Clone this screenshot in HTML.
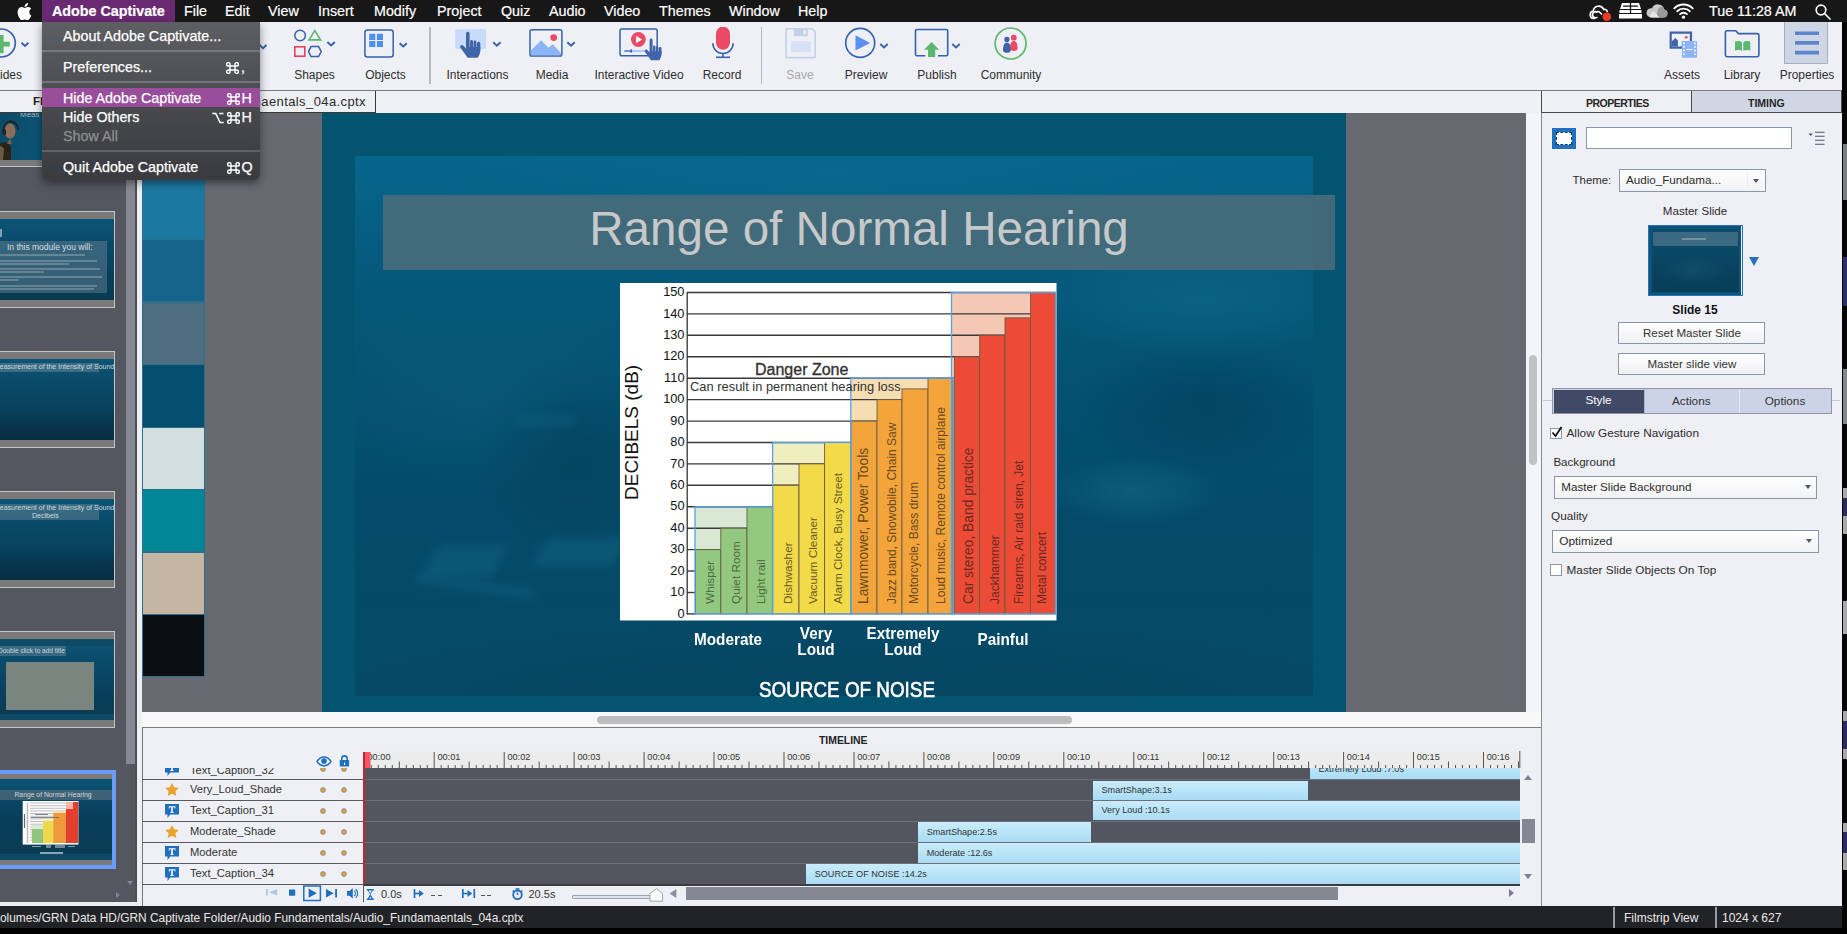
<!DOCTYPE html>
<html><head><meta charset="utf-8">
<style>
*{margin:0;padding:0;box-sizing:border-box}
html,body{width:1847px;height:934px;overflow:hidden;background:#000;font-family:"Liberation Sans",sans-serif}
.a{position:absolute}
#menubar{left:0;top:0;width:1847px;height:22px;background:#171717;color:#fff;font-size:14.5px}
#menubar span{position:absolute;top:3px;white-space:nowrap;font-size:14.3px;line-height:16px;-webkit-text-stroke:.2px #fff}
#toolbar{left:0;top:22px;width:1842px;height:69px;background:#eff0f5;border-bottom:1px solid #7d7d80}
.tl{position:absolute;top:46px;font-size:12px;color:#2e2e30;white-space:nowrap;transform:translateX(-50%)}
#tabrow{left:0;top:91px;width:1842px;height:22px;background:#eef0f5;z-index:5}
#film{left:0;top:112px;width:137px;height:794px;background:#54575f}
#swcol{left:137px;top:112px;width:5px;height:794px;background:#eeeff3}
#canvas{left:142px;top:112px;width:1384px;height:600px;background:#686a72}
#slide{left:322px;top:112px;width:1024px;height:600px;background:#02546f;overflow:hidden}
#vscroll{left:1526px;top:112px;width:15px;height:600px;background:#f8f8f8}
#hscroll{left:142px;top:712px;width:1399px;height:16px;background:#f8f8f8;border-bottom:1px solid #7d7d80}
#tlhead{left:142px;top:728px;width:1399px;height:23px;background:#eef0f5;border-bottom:1px solid #54555a;border-left:1px solid #77787e}
#timeline{left:142px;top:750px;width:1399px;height:156px;background:#eef0f5;border-left:1px solid #77787e}
#props{left:1541px;top:112px;width:301px;height:794px;background:#eff0f5;border-left:1px solid #8a8a90}
#status{left:0;top:906px;width:1842px;height:22px;background:#222327;color:#f0f0f0;font-size:12.5px}
#botblack{left:0;top:928px;width:1847px;height:6px;background:#000}
#rightedge{left:1842px;top:22px;width:5px;height:906px;background:#050505}
</style></head><body>
<div id="menubar" class="a">
<svg class="a" style="left:17px;top:3px" width="15" height="17" viewBox="0 0 15 17"><path fill="#fff" d="M12.3 9.1c0-2.2 1.8-3.2 1.9-3.3-1-1.5-2.6-1.7-3.2-1.7-1.3-.1-2.6.8-3.3.8-.7 0-1.7-.8-2.8-.8C3.4 4.1 2 5 1.3 6.3-.2 8.9.9 12.8 2.4 15c.7 1 1.5 2.2 2.6 2.1 1.1 0 1.5-.7 2.7-.7 1.3 0 1.6.7 2.8.7 1.2 0 1.9-1.1 2.6-2.1.8-1.2 1.2-2.3 1.2-2.4-.1 0-2-.8-2-3.5zM10.2 2.7C10.8 2 11.2 1 11.1 0c-.9 0-1.9.6-2.6 1.3-.6.6-1.1 1.6-.9 2.6 1 .1 2-.5 2.6-1.2z"/></svg>
<div class="a" style="left:42px;top:0;width:133px;height:22px;background:#6a2a72"></div>
<span style="left:52px;font-weight:bold;font-size:14.3px">Adobe Captivate</span>
<span style="left:184px">File</span>
<span style="left:225px">Edit</span>
<span style="left:268px">View</span>
<span style="left:318px">Insert</span>
<span style="left:374px">Modify</span>
<span style="left:437px">Project</span>
<span style="left:501px">Quiz</span>
<span style="left:549px">Audio</span>
<span style="left:604px">Video</span>
<span style="left:659px">Themes</span>
<span style="left:729px">Window</span>
<span style="left:798px">Help</span>
<span style="left:1709px">Tue 11:28 AM</span>
<svg class="a" style="left:1589px;top:3px" width="24" height="18" viewBox="0 0 24 18"><g fill="none" stroke="#fff" stroke-width="1.6"><path d="M6 15.5H4.5a3.8 3.8 0 0 1-.3-7.5 5.5 5.5 0 0 1 10.5-1.5 3 3 0 0 1 3.8 2.6"/><path d="M8.5 9.5a3 3 0 1 0 0 4.5"/><path d="M6.5 9.5a3 3 0 0 1 4.5 0l2 2"/></g><circle cx="17.8" cy="13.8" r="4.3" fill="#f03a24"/></svg>
<svg class="a" style="left:1619px;top:3px" width="23" height="16" viewBox="0 0 23 16"><path fill="#fff" d="M3 0h17l2 6H1zM0.5 7h22v3h-22zM0 11h23v4.5H0z"/><path stroke="#171717" stroke-width="1.3" d="M11.5 0v10M4 3.2h15"/></svg>
<svg class="a" style="left:1646px;top:3px" width="22" height="15" viewBox="0 0 22 15"><path fill="#c9c9c9" d="M4.5 14.5h13a4 4 0 0 0 .8-7.9A6.5 6.5 0 0 0 6 5.2a4.7 4.7 0 0 0-1.5 9.3z"/><path fill="#9a9a9a" d="M10 14.5h7.5a4 4 0 0 0 .8-7.9 6 6 0 0 0-2-2.8 5 5 0 0 0-4.8 4.5z"/><path fill="#e8e8e8" d="M4.5 14.5h9l-5.5-6a4.7 4.7 0 0 0-3.5 6z"/></svg>
<svg class="a" style="left:1673px;top:3px" width="21" height="16" viewBox="0 0 21 16"><g fill="none" stroke="#fff" stroke-width="1.9" stroke-linecap="round"><path d="M1.3 5.3a13 13 0 0 1 18.4 0"/><path d="M4.2 8.2a9 9 0 0 1 12.6 0"/><path d="M7.1 11.1a4.8 4.8 0 0 1 6.8 0"/></g><circle cx="10.5" cy="14.2" r="1.6" fill="#fff"/></svg>
<svg class="a" style="left:1815px;top:4px" width="16" height="16" viewBox="0 0 16 16"><g fill="none" stroke="#fff" stroke-width="1.7"><circle cx="6" cy="6" r="4.8"/><path d="M9.5 9.5l5.5 5.5" stroke-linecap="round"/></g></svg>
</div>
<div id="toolbar" class="a">
<!-- slides -->
<svg class="a" style="left:0;top:5px" width="30" height="32" viewBox="0 5 30 32"><circle cx="1.3" cy="21" r="14" fill="none" stroke="#3561ae" stroke-width="1.7"/><path fill="#5cb86f" d="M-1 13h4.6v6.8h6.2v4.6H3.6v6.8H-1z"/><path d="M21.5 20.8l3.5 3.2 3.5-3.2" fill="none" stroke="#3561ae" stroke-width="1.9"/></svg>
<div class="tl" style="left:11px">ides</div>
<svg class="a" style="left:255px;top:21px" width="15" height="10"><path d="M4.5 2l3.5 3.2 3.5-3.2" fill="none" stroke="#3561ae" stroke-width="1.9"/></svg>
<!-- shapes -->
<svg class="a" style="left:290px;top:5px" width="50" height="38" viewBox="290 27 50 38"><circle cx="300.1" cy="35.5" r="5.3" fill="none" stroke="#3561ae" stroke-width="1.5"/><path d="M314.8 30.6l5.8 9.3h-11.6z" fill="none" stroke="#5cb86f" stroke-width="1.6" stroke-linejoin="miter"/><rect x="294.8" y="46.8" width="10" height="9.4" fill="none" stroke="#e8405e" stroke-width="1.6"/><path d="M311 46.6h7.6l2.6 5-2.6 4.9H311l-2.5-4.9z" fill="none" stroke="#3561ae" stroke-width="1.5"/><path d="M327.4 42l3.7 3.4 3.7-3.4" fill="none" stroke="#3561ae" stroke-width="1.9"/></svg>
<div class="tl" style="left:314.5px">Shapes</div>
<!-- objects -->
<svg class="a" style="left:360px;top:5px" width="50" height="38" viewBox="360 27 50 38"><rect x="364.9" y="29.9" width="28.3" height="27" rx="2.5" fill="none" stroke="#3561ae" stroke-width="1.5"/><path fill="#4f8ef2" d="M369.2 33.8h6.1v6.1h-6.1zM376.9 33.8h6.1v6.1h-6.1zM369.2 41h6.1v6.1h-6.1zM376.9 41h6.1v6.1h-6.1z"/><path d="M399.6 43.2l3.6 3.3 3.6-3.3" fill="none" stroke="#3561ae" stroke-width="1.9"/></svg>
<div class="tl" style="left:385.5px">Objects</div>
<div class="a" style="left:429px;top:5px;width:1.5px;height:57px;background:#b7bac4"></div>
<!-- interactions -->
<svg class="a" style="left:450px;top:5px" width="60" height="38" viewBox="450 27 60 38"><rect x="455.2" y="29.1" width="30.9" height="19.9" rx="1.5" fill="#c7dcfb"/><g fill="#3f64a8"><rect x="466" y="31.8" width="3.6" height="18" rx="1.8"/><rect x="470.1" y="40.1" width="2.9" height="10" rx="1.45"/><rect x="473.5" y="40.6" width="2.9" height="10" rx="1.45"/><rect x="476.9" y="41.8" width="3.4" height="10" rx="1.7"/><path d="M466 47h14.3v4c0 3-1.6 5-2.6 6.8h-10.2c-1.5-2.8-4.4-6.3-7-9.8-.7-1-.3-2.2.5-2.7.8-.5 1.8-.3 2.4.5l2.6 2.7z"/></g><path d="M493.2 42.3l3.7 3.4 3.7-3.4" fill="none" stroke="#3561ae" stroke-width="1.9"/></svg>
<div class="tl" style="left:477.5px">Interactions</div>
<!-- media -->
<svg class="a" style="left:525px;top:5px" width="55" height="38" viewBox="525 27 55 38"><rect x="530" y="29.8" width="31.9" height="26.3" rx="1.8" fill="none" stroke="#3561ae" stroke-width="1.5"/><path fill="#8db4f7" d="M530.8 55.3V50.6l10.3-10.4 7.4 7.6 4.2-3.6 8.4 9v2.1z"/><circle cx="553.7" cy="37.6" r="3.4" fill="#ea4a63"/><path d="M567.3 42.3l3.7 3.4 3.7-3.4" fill="none" stroke="#3561ae" stroke-width="1.9"/></svg>
<div class="tl" style="left:552px">Media</div>
<!-- interactive video -->
<svg class="a" style="left:615px;top:5px" width="50" height="38" viewBox="615 27 50 38"><rect x="620" y="29.1" width="37.2" height="26.7" rx="1.8" fill="none" stroke="#3561ae" stroke-width="1.5"/><circle cx="638.4" cy="39.5" r="7.4" fill="#ea4a63"/><path fill="#fff" d="M636 35.7l6 3.8-6 3.8z"/><path d="M624.3 51h7" stroke="#3561ae" stroke-width="1.3"/><rect x="630.4" y="49.4" width="1.7" height="3.2" fill="#3561ae"/><path d="M632 51h16" stroke="#8db4f7" stroke-width="1.3"/><g fill="#3f64a8" transform="translate(649.6 38.6) scale(0.83) translate(-466 -31.8)"><rect x="466" y="31.8" width="3.6" height="18" rx="1.8"/><rect x="470.1" y="40.1" width="2.9" height="10" rx="1.45"/><rect x="473.5" y="40.6" width="2.9" height="10" rx="1.45"/><rect x="476.9" y="41.8" width="3.4" height="10" rx="1.7"/><path d="M466 47h14.3v4c0 3-1.6 5-2.6 6.8h-10.2c-1.5-2.8-4.4-6.3-7-9.8-.7-1-.3-2.2.5-2.7.8-.5 1.8-.3 2.4.5l2.6 2.7z"/></g></svg>
<div class="tl" style="left:639px">Interactive Video</div>
<!-- record -->
<svg class="a" style="left:705px;top:5px" width="35" height="38" viewBox="705 27 35 38"><rect x="716" y="26.6" width="14" height="23.2" rx="7" fill="#ea4a63"/><path d="M712.8 43.3a10.2 10.2 0 0 0 20.4 0" fill="none" stroke="#3561ae" stroke-width="1.6"/><path d="M723 53.5v4" stroke="#3561ae" stroke-width="1.6"/><path d="M716 57.3h14" stroke="#3561ae" stroke-width="1.6"/></svg>
<div class="tl" style="left:722px">Record</div>
<div class="a" style="left:760.5px;top:5px;width:1.5px;height:57px;background:#b7bac4"></div>
<!-- save -->
<svg class="a" style="left:780px;top:5px" width="40" height="38" viewBox="780 27 40 38"><path d="M787 28.8h25l3.2 3.2v24.8c0 .4-.3.8-.8.8h-27.6c-.4 0-.8-.4-.8-.8V29.6c0-.5.4-.8.8-.8z" fill="none" stroke="#c3d0ea" stroke-width="1.6"/><path fill="#c3d0ea" d="M793.8 29h14v7.2h-14z"/><path fill="#eff0f5" d="M803.5 30h2.3v4.4h-2.3z"/><rect x="791.2" y="41.3" width="19.6" height="11" rx="1" fill="#d6e1f5"/></svg>
<div class="tl" style="left:800px;color:#a9aaae">Save</div>
<!-- preview -->
<svg class="a" style="left:840px;top:5px" width="55" height="38" viewBox="840 27 55 38"><circle cx="860.2" cy="42.9" r="14.5" fill="none" stroke="#3561ae" stroke-width="1.6"/><path fill="#5b8ff2" d="M855.5 35.2l14.6 7.7-14.6 7.7z"/><path d="M880.3 44l3.7 3.4 3.7-3.4" fill="none" stroke="#3561ae" stroke-width="1.9"/></svg>
<div class="tl" style="left:866px">Preview</div>
<!-- publish -->
<svg class="a" style="left:910px;top:5px" width="55" height="38" viewBox="910 27 55 38"><path d="M925.3 55.8h-8.5a1.3 1.3 0 0 1-1.3-1.3V30.8c0-.7.6-1.3 1.3-1.3h29.6c.7 0 1.3.6 1.3 1.3v23.7c0 .7-.6 1.3-1.3 1.3h-8.4" fill="none" stroke="#3561ae" stroke-width="1.6"/><path fill="#5cb86f" d="M931.6 42l7.6 7.8h-4v7.3h-7.2v-7.3h-4z"/><path d="M952.3 44l3.7 3.4 3.7-3.4" fill="none" stroke="#3561ae" stroke-width="1.9"/></svg>
<div class="tl" style="left:937px">Publish</div>
<!-- community -->
<svg class="a" style="left:990px;top:5px" width="45" height="38" viewBox="990 27 45 38"><circle cx="1010.6" cy="43.5" r="15.5" fill="none" stroke="#5cb86f" stroke-width="1.7"/><circle cx="1013.8" cy="37.7" r="2.9" fill="#ea4a63"/><path fill="#ea4a63" d="M1010 48.5c0-5 1.5-7.4 3.8-7.4s3.8 2.4 3.8 7.4c0 1.4-1.7 2.5-3.8 2.5s-3.8-1.1-3.8-2.5z"/><circle cx="1006.9" cy="39.4" r="2.6" fill="#3f64a8"/><path fill="#3f64a8" d="M1003 50.2c0-4.8 1.4-7.6 3.9-7.6s3.9 2.8 3.9 7.6c0 1.4-1.7 2.6-3.9 2.6s-3.9-1.2-3.9-2.6z"/></svg>
<div class="tl" style="left:1011px">Community</div>
<!-- assets -->
<svg class="a" style="left:1665px;top:5px" width="36" height="38" viewBox="1665 27 36 38"><path fill="#3f64a8" d="M1669.6 31.4h22.5v9.6h-10.1v7.7h-12.4z"/><path fill="#eff0f5" d="M1671.8 33.8h18v7.2h-8v5.5h-10z"/><path fill="#3f64a8" d="M1671.8 46.5v-5.2l3.6-3.3 2.5 2.4v6.1z"/><circle cx="1686.2" cy="37.3" r="1.4" fill="#ea4a63"/><rect x="1682" y="41" width="15.1" height="16.7" rx="1.2" fill="#8db4f7"/><path fill="#fff" d="M1683.2 42.6h1.6v1.6h-1.6zM1683.2 46.2h1.6v1.6h-1.6zM1683.2 49.8h1.6v1.6h-1.6zM1683.2 53.4h1.6v1.6h-1.6zM1694.2 42.6h1.6v1.6h-1.6zM1694.2 46.2h1.6v1.6h-1.6zM1694.2 49.8h1.6v1.6h-1.6zM1694.2 53.4h1.6v1.6h-1.6zM1686.5 49.1h6v.9h-6z"/></svg>
<div class="tl" style="left:1682px">Assets</div>
<!-- library -->
<svg class="a" style="left:1720px;top:5px" width="45" height="38" viewBox="1720 27 45 38"><path d="M1727 30.8h8.8l2.6 2.8h18.9c1 0 1.6.7 1.6 1.6v19.9c0 .9-.7 1.6-1.6 1.6h-30.3c-.9 0-1.6-.7-1.6-1.6V32.4c0-.9.7-1.6 1.6-1.6z" fill="none" stroke="#3561ae" stroke-width="1.6"/><path fill="#5cb86f" d="M1735 41.5c2.3-.8 5.2-.8 7 .6v8.7c-1.8-1-4.7-1-7-.3zM1743.3 42.1c1.8-1.4 4.7-1.4 7-.6v9c-2.3-.7-5.2-.7-7 .3z"/></svg>
<div class="tl" style="left:1742px">Library</div>
<!-- properties -->
<div class="a" style="left:1784px;top:0;width:44px;height:42px;background:#ced5e4;border:1px solid #a6aec1;border-top:none"></div>
<svg class="a" style="left:1790px;top:5px" width="35" height="38" viewBox="1790 27 35 38"><path fill="#5b86cd" d="M1795 31.4h24v3.7h-24zM1795 41.1h24v3.7h-24zM1795 50.8h24v3.7h-24z"/></svg>
<div class="tl" style="left:1807px">Properties</div>
</div>
<div id="tabrow" class="a">
<div class="a" style="left:0;top:0;width:376px;height:22px;background:#eff0f3;border-right:1px solid #3a3a3a;border-bottom:1px solid #3a3a3a"></div>
<div class="a" style="left:33px;top:4px;font-size:11.5px;font-weight:bold;color:#222">FILMSTRIP</div>
<div class="a" style="left:0;top:3px;width:366px;text-align:right;font-size:13px;letter-spacing:0.4px;color:#2a2a2a;white-space:nowrap">Audio_Fundamaentals_04a.cptx</div>
<div class="a" style="left:376px;top:0;width:1165px;height:22px;background:#f0f1f5"></div>
<div class="a" style="left:1541px;top:0;width:151px;height:22px;background:#eff0f4;border-left:1px solid #4a4a4a;border-bottom:1px solid #4a4a4a"></div>
<div class="a" style="left:1691px;top:0;width:151px;height:22px;background:#d0d6e4;border-left:1px solid #4a4a4a;border-bottom:1px solid #4a4a4a;border-right:1px solid #4a4a4a"></div>
<div class="a" style="left:1586px;top:6px;font-size:10.5px;font-weight:bold;letter-spacing:-0.5px;color:#262626">PROPERTIES</div>
<div class="a" style="left:1748px;top:6px;font-size:10.5px;font-weight:bold;color:#262626">TIMING</div>
</div>
<div id="film" class="a">
<div class="a" style="left:-2px;top:-2px;width:117px;height:57px;border:1px solid #c4c4c6;border-top:none;background:#7a7a7a"><div class="a" style="left:0;top:0;width:115px;height:49.5px;overflow:hidden;background:linear-gradient(100deg,#0b4a68,#0c5a7c 60%,#0a4e6e)">
<svg class="a" style="left:0;top:0" width="40" height="50" viewBox="0 0 40 50"><path d="M0 34c3-2 6-2 9-1l3 4v13H0z" fill="#2a241c"/><path d="M0 36c2 0 4 1 5 3l-1 11H0z" fill="#6f5a40"/><ellipse cx="11" cy="21" rx="5.5" ry="7.5" fill="#8c6e58"/><path d="M4.5 21c0-6 3-9.5 7-9.5s7.5 3 7.5 8" fill="none" stroke="#222" stroke-width="1.8"/><rect x="3.5" y="19" width="3.5" height="6" rx="1.5" fill="#222"/><path d="M11 28l2 6h-5z" fill="#7a604c"/></svg>
<div class="a" style="left:21px;top:0;font-size:8px;color:#9fb4c0;white-space:nowrap;line-height:9px">Meas</div></div></div>
<div class="a" style="left:-2px;top:99px;width:117px;height:97px;border:1px solid #c4c4c6;background:#7a7a7a"><div class="a" style="left:0;top:7px;width:115px;height:81px;overflow:hidden;background:linear-gradient(#0b5476,#0a4a69 30%,#083f5b 70%,#0a3a52)"><div class="a" style="left:0;top:10px;width:3px;height:8px;background:#cfd6da;opacity:.6"></div>
<div class="a" style="left:0;top:22px;width:108px;height:52px;background:rgba(110,135,150,.45)"></div>
<div class="a" style="left:8px;top:23px;font-size:8.5px;color:#d8dde0;white-space:nowrap">In this module you will:</div>
<div class="a" style="left:0;top:35px;width:86px;height:2px;background:rgba(220,225,230,.28)"></div>
<div class="a" style="left:0;top:40.5px;width:98px;height:2px;background:rgba(220,225,230,.28)"></div><div class="a" style="left:0;top:43.5px;width:70px;height:2px;background:rgba(220,225,230,.28)"></div>
<div class="a" style="left:0;top:49px;width:101px;height:2px;background:rgba(220,225,230,.28)"></div><div class="a" style="left:0;top:52px;width:45px;height:2px;background:rgba(220,225,230,.28)"></div>
<div class="a" style="left:0;top:57px;width:103px;height:2px;background:rgba(220,225,230,.28)"></div><div class="a" style="left:0;top:60px;width:20px;height:2px;background:rgba(220,225,230,.28)"></div>
<div class="a" style="left:0;top:65.5px;width:98px;height:2px;background:rgba(220,225,230,.28)"></div><div class="a" style="left:0;top:68.5px;width:95px;height:2px;background:rgba(220,225,230,.28)"></div></div></div>
<div class="a" style="left:-2px;top:239px;width:117px;height:97px;border:1px solid #c4c4c6;background:#7a7a7a"><div class="a" style="left:0;top:7px;width:115px;height:81px;overflow:hidden;background:linear-gradient(#0b5476,#0a4a69 30%,#083f5b 70%,#0a3a52)"><div class="a" style="left:0;top:4px;width:100px;height:9px;background:rgba(120,145,160,.45)"></div><div class="a" style="left:-5px;top:4px;font-size:7px;color:#d0d8dc;white-space:nowrap">Measurement of the Intensity of Sound</div>
<div class="a" style="left:0;top:50px;width:115px;height:31px;background:linear-gradient(rgba(0,0,0,0),rgba(0,20,35,.35))"></div></div></div>
<div class="a" style="left:-2px;top:379px;width:117px;height:97px;border:1px solid #c4c4c6;background:#7a7a7a"><div class="a" style="left:0;top:7px;width:115px;height:81px;overflow:hidden;background:linear-gradient(#0b5476,#0a4a69 30%,#083f5b 70%,#0a3a52)"><div class="a" style="left:0;top:5px;width:100px;height:16px;background:rgba(120,145,160,.4)"></div><div class="a" style="left:-5px;top:5px;font-size:7px;color:#d0d8dc;white-space:nowrap;line-height:8px">Measurement of the Intensity of Sound:<br><span style="margin-left:38px">Decibels</span></div>
<div class="a" style="left:0;top:50px;width:115px;height:31px;background:linear-gradient(rgba(0,0,0,0),rgba(0,20,35,.35))"></div></div></div>
<div class="a" style="left:-2px;top:519px;width:117px;height:97px;border:1px solid #c4c4c6;background:#7a7a7a"><div class="a" style="left:0;top:7px;width:115px;height:81px;overflow:hidden;background:linear-gradient(#0b5476,#0a4a69 30%,#083f5b 70%,#0a3a52)"><div class="a" style="left:0;top:0;width:115px;height:7px;background:#0d4a66"></div><div class="a" style="left:0;top:7px;width:67px;height:10px;background:rgba(110,140,155,.45)"></div><div class="a" style="left:-1px;top:8px;font-size:6.5px;color:#cfd6da;white-space:nowrap">Double click to add title</div>
<div class="a" style="left:7px;top:23px;width:88px;height:48px;background:#7a8580"></div>
<div class="a" style="left:0;top:75px;width:115px;height:6px;background:#0d4a66"></div></div></div>
<div class="a" style="left:-4px;top:658px;width:120px;height:99px;border:4px solid #6a9bfb;background:#7a7a7a"><div class="a" style="left:0;top:5px;width:112px;height:81px;overflow:hidden;background:linear-gradient(#0b5476,#083f5b 45%,#0a3a52)"><div class="a" style="left:0;top:11px;width:112px;height:9.5px;background:#3d6275"></div><div class="a" style="left:0;top:11px;width:106px;text-align:center;font-size:6.8px;line-height:9.5px;color:#cfd6da;white-space:nowrap">Range of Normal Hearing</div>
<svg class="a" style="left:0;top:0" width="112" height="81" viewBox="0 0 112 81"><rect x="22.7" y="22" width="55.7" height="43.6" fill="#fff"/><path d="M30 24.00H66M30 26.65H66M30 29.30H66M30 31.95H66M30 34.60H66M30 37.25H66M30 39.90H66M30 42.55H66M30 45.20H66M30 47.85H66M30 50.50H66M30 53.15H66M30 55.80H66M30 58.45H66M30 61.10H66" stroke="#777" stroke-width=".5"/><path d="M24.5 35v14" stroke="#666" stroke-width="1.2"/><path d="M27.5 24v40" stroke="#bbb" stroke-width="1.5"/><rect x="32" y="46" width="11" height="18" fill="#dbe9d6"/><rect x="32" y="50" width="11" height="14" fill="#8fc57e"/><rect x="43" y="40" width="10.3" height="24" fill="#efeebf"/><rect x="43" y="42" width="10.3" height="22" fill="#eed94a"/><rect x="53.3" y="32" width="12.7" height="32" fill="#f6dcb0"/><rect x="53.3" y="34" width="12.7" height="30" fill="#ef9a3b"/><rect x="66" y="23" width="12.2" height="41" fill="#e2402f"/><rect x="66" y="23" width="7" height="7" fill="#f3b9a4"/><path d="M35 35.5h13M31 38.5h28" stroke="#666" stroke-width=".8"/></svg>
<div class="a" style="left:32px;top:66.5px;width:9px;height:1.5px;background:rgba(230,235,240,.55)"></div>
<div class="a" style="left:46px;top:66px;width:5px;height:3px;background:rgba(230,235,240,.45)"></div>
<div class="a" style="left:55px;top:66px;width:10px;height:3px;background:rgba(230,235,240,.45)"></div>
<div class="a" style="left:68px;top:66.5px;width:7px;height:1.5px;background:rgba(230,235,240,.55)"></div>
<div class="a" style="left:40px;top:73px;width:23px;height:2px;background:rgba(230,235,240,.6)"></div>
<div class="a" style="left:0;top:75px;width:112px;height:6px;background:#0d4a66"></div></div></div>
<div class="a" style="left:126px;top:0;width:9px;height:652px;background:#868994"></div>
<div class="a" style="left:127px;top:769px;width:0;height:0;border-left:3.5px solid transparent;border-right:3.5px solid transparent;border-top:4px solid #7f8496"></div>
<div class="a" style="left:116px;top:780px;width:0;height:0;border-top:3.5px solid transparent;border-bottom:3.5px solid transparent;border-left:4px solid #7f8496"></div>
<div class="a" style="left:135px;top:0;width:2px;height:794px;background:#4b4e55"></div>
<div class="a" style="left:0;top:790px;width:137px;height:4px;background:#eeeff3"></div>
</div>
<div id="swcol" class="a"></div>
<div id="canvas" class="a"></div>
<div id="slide" class="a">
<div class="a" style="left:33px;top:44px;width:958px;height:540px;overflow:hidden;background:linear-gradient(#06638a 0,#065f83 10%,#05587a 25%,#045070 45%,#044b69 65%,#054a67 100%)">
<div class="a" style="left:-150px;top:-60px;width:1250px;height:170px;background:radial-gradient(closest-side,rgba(10,115,150,.35),rgba(10,115,150,0))"></div>
<div class="a" style="left:-60px;top:130px;width:360px;height:200px;background:radial-gradient(closest-side,rgba(25,110,140,.22),rgba(25,110,140,0))"></div>
<div class="a" style="left:680px;top:90px;width:330px;height:110px;background:radial-gradient(closest-side,rgba(20,120,150,.35),rgba(20,120,150,0))"></div>
<div class="a" style="left:690px;top:300px;width:180px;height:70px;background:radial-gradient(closest-side,rgba(30,120,150,.35),rgba(30,120,150,0))"></div>
<div class="a" style="left:720px;top:180px;width:260px;height:140px;background:radial-gradient(closest-side,rgba(0,30,50,.22),rgba(0,30,50,0))"></div>
<div class="a" style="left:120px;top:200px;width:200px;height:200px;background:radial-gradient(closest-side,rgba(0,30,50,.2),rgba(0,30,50,0))"></div>
<div class="a" style="left:75px;top:390px;width:70px;height:30px;background:rgba(30,120,150,.25);transform:skewX(-25deg);filter:blur(4px)"></div>
<div class="a" style="left:185px;top:382px;width:80px;height:28px;background:rgba(30,120,150,.25);transform:skewX(-30deg);filter:blur(4px)"></div>
<div class="a" style="left:60px;top:425px;width:120px;height:10px;background:rgba(30,120,150,.22);transform:rotate(8deg);filter:blur(4px)"></div>
<div class="a" style="left:160px;top:260px;width:60px;height:10px;background:rgba(30,120,150,.22);filter:blur(4px)"></div>
<div class="a" style="left:-60px;top:460px;width:1100px;height:160px;background:radial-gradient(closest-side,rgba(0,30,50,.12),rgba(0,30,50,0))"></div>
</div>
<div class="a" style="left:61px;top:83px;width:952px;height:75px;background:#436a7b;opacity:.97"></div>
<div class="a" style="left:61px;top:89px;width:952px;text-align:center;font-size:47.6px;color:#c6c8c9;white-space:nowrap">Range of Normal Hearing</div>
</div>
<svg class="a" style="left:620px;top:283px" width="437" height="338" viewBox="620 283 437 338">
<rect x="620" y="283" width="436.5" height="337.5" fill="#fff"/>
<rect x="695" y="506.8" width="77.6" height="107.1" fill="#d9e8d5"/>
<rect x="772.6" y="442.5" width="78.1" height="171.4" fill="#efeebf"/>
<rect x="850.8" y="378.2" width="102.7" height="235.7" fill="#f7deb2"/>
<rect x="951.5" y="292.5" width="104.2" height="321.4" fill="#f5c7b5"/>
<path d="M687 613.9H695.5" stroke="#3a3a3a" stroke-width="1.4"/>
<text x="684.5" y="617.5" text-anchor="end" font-size="12.8" fill="#111">0</text>
<path d="M687 592.5H695.5" stroke="#3a3a3a" stroke-width="1.4"/>
<text x="684.5" y="596.1" text-anchor="end" font-size="12.8" fill="#111">10</text>
<path d="M687 571.0H695.5" stroke="#3a3a3a" stroke-width="1.4"/>
<text x="684.5" y="574.6" text-anchor="end" font-size="12.8" fill="#111">20</text>
<path d="M687 549.6H720.8" stroke="#3a3a3a" stroke-width="1.4"/>
<text x="684.5" y="553.2" text-anchor="end" font-size="12.8" fill="#111">30</text>
<path d="M687 528.2H747" stroke="#3a3a3a" stroke-width="1.4"/>
<text x="684.5" y="531.8" text-anchor="end" font-size="12.8" fill="#111">40</text>
<path d="M687 506.8H772.6" stroke="#3a3a3a" stroke-width="1.4"/>
<text x="684.5" y="510.4" text-anchor="end" font-size="12.8" fill="#111">50</text>
<path d="M687 485.3H799" stroke="#3a3a3a" stroke-width="1.4"/>
<text x="684.5" y="488.9" text-anchor="end" font-size="12.8" fill="#111">60</text>
<path d="M687 463.9H824.6" stroke="#3a3a3a" stroke-width="1.4"/>
<text x="684.5" y="467.5" text-anchor="end" font-size="12.8" fill="#111">70</text>
<path d="M687 442.5H850.8" stroke="#3a3a3a" stroke-width="1.4"/>
<text x="684.5" y="446.1" text-anchor="end" font-size="12.8" fill="#111">80</text>
<path d="M687 421.1H877" stroke="#3a3a3a" stroke-width="1.4"/>
<text x="684.5" y="424.7" text-anchor="end" font-size="12.8" fill="#111">90</text>
<path d="M687 399.6H902" stroke="#3a3a3a" stroke-width="1.4"/>
<text x="684.5" y="403.2" text-anchor="end" font-size="12.8" fill="#111">100</text>
<path d="M687 378.2H954.5" stroke="#3a3a3a" stroke-width="1.4"/>
<text x="684.5" y="381.8" text-anchor="end" font-size="12.8" fill="#111">110</text>
<path d="M687 356.8H979.7" stroke="#3a3a3a" stroke-width="1.4"/>
<text x="684.5" y="360.4" text-anchor="end" font-size="12.8" fill="#111">120</text>
<path d="M687 335.3H1005" stroke="#3a3a3a" stroke-width="1.4"/>
<text x="684.5" y="338.9" text-anchor="end" font-size="12.8" fill="#111">130</text>
<path d="M687 313.9H1030.5" stroke="#3a3a3a" stroke-width="1.4"/>
<text x="684.5" y="317.5" text-anchor="end" font-size="12.8" fill="#111">140</text>
<path d="M687 292.5H1055.5" stroke="#3a3a3a" stroke-width="1.4"/>
<text x="684.5" y="296.1" text-anchor="end" font-size="12.8" fill="#111">150</text>
<path d="M687.2 292.0V614.5" stroke="#333" stroke-width="1.3"/>
<rect x="695.5" y="549.6" width="25.3" height="64.3" fill="#93c87f" stroke="#6b5d45" stroke-width="0.9"/>
<rect x="720.8" y="528.2" width="26.2" height="85.7" fill="#93c87f" stroke="#6b5d45" stroke-width="0.9"/>
<rect x="747" y="506.8" width="25.6" height="107.1" fill="#93c87f" stroke="#6b5d45" stroke-width="0.9"/>
<rect x="772.6" y="485.3" width="26.4" height="128.6" fill="#f2da48" stroke="#6b5d45" stroke-width="0.9"/>
<rect x="799" y="463.9" width="25.6" height="150.0" fill="#f2da48" stroke="#6b5d45" stroke-width="0.9"/>
<rect x="824.6" y="442.5" width="26.0" height="171.4" fill="#f2da48" stroke="#6b5d45" stroke-width="0.9"/>
<rect x="850.8" y="421.1" width="26.2" height="192.8" fill="#f3a43a" stroke="#6b5d45" stroke-width="0.9"/>
<rect x="877" y="399.6" width="25.0" height="214.3" fill="#f3a43a" stroke="#6b5d45" stroke-width="0.9"/>
<rect x="902" y="388.9" width="26.0" height="225.0" fill="#f3a43a" stroke="#6b5d45" stroke-width="0.9"/>
<rect x="928" y="378.2" width="25.0" height="235.7" fill="#f3a43a" stroke="#6b5d45" stroke-width="0.9"/>
<rect x="954.5" y="356.8" width="25.2" height="257.1" fill="#ec4b36" stroke="#6b5d45" stroke-width="0.9"/>
<rect x="979.7" y="335.3" width="25.3" height="278.6" fill="#ec4b36" stroke="#6b5d45" stroke-width="0.9"/>
<rect x="1005" y="317.8" width="25.5" height="296.1" fill="#ec4b36" stroke="#6b5d45" stroke-width="0.9"/>
<rect x="1030.5" y="292.5" width="25.0" height="321.4" fill="#ec4b36" stroke="#6b5d45" stroke-width="0.9"/>
<text transform="translate(714.4 604) rotate(-90)" font-size="11.8" fill="#4d6a42">Whisper</text>
<text transform="translate(739.7 604) rotate(-90)" font-size="11.8" fill="#4d6a42">Quiet Room</text>
<text transform="translate(764.7 604) rotate(-90)" font-size="11.8" fill="#4d6a42">Light rail</text>
<text transform="translate(791.7 604) rotate(-90)" font-size="11.8" fill="#6a5a22">Dishwasher</text>
<text transform="translate(816.7 604) rotate(-90)" font-size="11.8" fill="#6a5a22">Vacuum Cleaner</text>
<text transform="translate(841.9 604) rotate(-90)" font-size="11.8" fill="#6a5a22">Alarm Clock, Busy Street</text>
<text transform="translate(867.8 604) rotate(-90)" font-size="13.8" fill="#6a4a1e">Lawnmower, Power Tools</text>
<text transform="translate(895.5 604) rotate(-90)" font-size="12" fill="#6a4a1e">Jazz band, Snowobile, Chain Saw</text>
<text transform="translate(918.1 604) rotate(-90)" font-size="12" fill="#6a4a1e">Motorcycle, Bass drum</text>
<text transform="translate(945.2 604) rotate(-90)" font-size="12.1" fill="#6a4a1e">Loud music, Remote control airplane</text>
<text transform="translate(972.6 604) rotate(-90)" font-size="13.8" fill="#6a2a22">Car stereo, Band practice</text>
<text transform="translate(999.3 604) rotate(-90)" font-size="12" fill="#6a2a22">Jackhammer</text>
<text transform="translate(1022.5 604) rotate(-90)" font-size="12" fill="#6a2a22">Firearms, Air raid siren, Jet</text>
<text transform="translate(1046.1 604) rotate(-90)" font-size="12" fill="#6a2a22">Metal concert</text>
<rect x="695" y="506.8" width="77.6" height="107.1" fill="none" stroke="#58a2ea" stroke-width="1.3"/>
<rect x="772.6" y="442.5" width="78.1" height="171.4" fill="none" stroke="#58a2ea" stroke-width="1.3"/>
<rect x="850.8" y="378.2" width="102.7" height="235.7" fill="none" stroke="#58a2ea" stroke-width="1.3"/>
<rect x="951.5" y="292.5" width="104.2" height="321.4" fill="none" stroke="#58a2ea" stroke-width="1.3"/>
<text x="755" y="375" font-size="16" fill="#333" stroke="#333" stroke-width="0.35">Danger Zone</text>
<text x="690" y="391" font-size="12.9" fill="#333">Can result in permanent hearing loss</text>
<text transform="translate(638 500) rotate(-90)" font-size="19" fill="#111">DECIBELS (dB)</text>
</svg>
<div class="a" style="left:678px;top:631.7px;width:100px;text-align:center;font-size:17px;font-weight:bold;color:#fff;line-height:16px;transform:scaleX(.9)">Moderate</div>
<div class="a" style="left:766px;top:625.9px;width:100px;text-align:center;font-size:17px;font-weight:bold;color:#fff;line-height:15.7px;transform:scaleX(.9)">Very<br>Loud</div>
<div class="a" style="left:853px;top:625.9px;width:100px;text-align:center;font-size:17px;font-weight:bold;color:#fff;line-height:15.7px;transform:scaleX(.9)">Extremely<br>Loud</div>
<div class="a" style="left:953px;top:631.7px;width:100px;text-align:center;font-size:17px;font-weight:bold;color:#fff;line-height:16px;transform:scaleX(.9)">Painful</div>
<div class="a" style="left:697px;top:679px;width:300px;text-align:center;font-size:21.5px;color:#fff;line-height:20px;transform:scaleX(.877);-webkit-text-stroke:.6px #fff;top:679.6px">SOURCE OF NOISE</div>
<div class="a" style="left:142px;top:112px;width:63px;height:65.0px;background:#0f6489;border:1px solid #2d6e8c"></div>
<div class="a" style="left:142px;top:176px;width:63px;height:63.8px;background:#1b78a0;border:1px solid #2d6e8c"></div>
<div class="a" style="left:142px;top:238.8px;width:63px;height:63.7px;background:#16648a;border:1px solid #2d6e8c"></div>
<div class="a" style="left:142px;top:301.5px;width:63px;height:63.7px;background:#4c6e80;border:1px solid #2d6e8c"></div>
<div class="a" style="left:142px;top:364.2px;width:63px;height:63.6px;background:#054e6f;border:1px solid #2d6e8c"></div>
<div class="a" style="left:142px;top:426.8px;width:63px;height:63.5px;background:#d4dfe0;border:1px solid #2d6e8c"></div>
<div class="a" style="left:142px;top:489.3px;width:63px;height:63.2px;background:#008797;border:1px solid #2d6e8c"></div>
<div class="a" style="left:142px;top:551.5px;width:63px;height:63.5px;background:#c5b6a3;border:1px solid #2d6e8c"></div>
<div class="a" style="left:142px;top:614px;width:63px;height:63.3px;background:#0b0f14;border:1px solid #2d6e8c"></div>
<div class="a" style="left:1526px;top:112px;width:15px;height:600px;background:#f4f5f8"></div>
<div class="a" style="left:1529px;top:355px;width:8px;height:110px;border-radius:4px;background:#c2c2c4"></div>


<div id="hscroll" class="a"></div>
<div class="a" style="left:597px;top:716px;width:475px;height:8px;border-radius:4px;background:#bdbdbf"></div>
<div id="tlhead" class="a"><div class="a" style="left:676px;top:7px;font-size:10.4px;font-weight:bold;color:#222;line-height:12px">TIMELINE</div></div>
<div id="timeline" class="a"></div>
<div class="a" style="left:0;top:0;width:0;height:0">
<svg class="a" style="left:315.5px;top:755.5px" width="16" height="11" viewBox="0 0 16 11"><path d="M1 5.4c1.9-3 4.2-4.5 7-4.5s5.1 1.5 7 4.5c-1.9 3-4.2 4.5-7 4.5S2.9 8.4 1 5.4z" fill="none" stroke="#1f6fbf" stroke-width="1.5"/><circle cx="8" cy="5.1" r="2.8" fill="#1f6fbf"/></svg>
<svg class="a" style="left:339px;top:755px" width="11" height="12" viewBox="0 0 11 12"><path d="M2.8 5V3.6a2.7 2.7 0 0 1 5.4 0V5" fill="none" stroke="#1f6fbf" stroke-width="1.6"/><rect x="0.8" y="5" width="9.3" height="6.4" rx=".6" fill="#1f6fbf"/><rect x="5" y="7.6" width="1.1" height="2.4" fill="#fff"/></svg>
<div class="a" style="left:142px;top:768px;width:221px;height:11px;overflow:hidden">
<div class="a" style="left:23px;top:-6.5px"><svg class="a" style="left:0px;top:0px" width="15" height="15" viewBox="0 0 15 15"><path fill="#1f6fbf" d="M0 0h14v10.6H5.2L2.5 14V10.6H0z"/><path fill="#fff" d="M3.8 2.2h6.6v2.3h-.7l-.3-1.2H7.8v5h1v.7H5.2v-.7h1v-5H4.9l-.3 1.2h-.8z"/></svg></div>
<div class="a" style="left:48px;top:-4.6px;font-size:11.2px;color:#333;white-space:nowrap;line-height:14px">Text_Caption_32</div>
<div class="a" style="left:179.4px;top:-1px;width:4px;height:4px;border-radius:50%;background:#e2a033;box-shadow:0 0 0 .7px #7d8494"></div><div class="a" style="left:200.4px;top:-1px;width:4px;height:4px;border-radius:50%;background:#e2a033;box-shadow:0 0 0 .7px #7d8494"></div>
</div>
<svg class="a" style="left:165px;top:783.4px" width="14" height="13" viewBox="0 0 14 13"><path fill="#e9a22b" d="M7 0l2.1 4.3 4.7.6-3.4 3.3.8 4.7L7 10.7l-4.2 2.2.8-4.7L.2 4.9l4.7-.6z"/></svg>
<div class="a" style="left:190px;top:782.4px;font-size:11.2px;color:#333;white-space:nowrap;line-height:14px">Very_Loud_Shade</div>
<div class="a" style="left:321.4px;top:788.1px;width:4px;height:4px;border-radius:50%;background:#e2a033;box-shadow:0 0 0 .7px #7d8494"></div>
<div class="a" style="left:342.4px;top:788.1px;width:4px;height:4px;border-radius:50%;background:#e2a033;box-shadow:0 0 0 .7px #7d8494"></div>
<svg class="a" style="left:165px;top:803.9px" width="15" height="15" viewBox="0 0 15 15"><path fill="#1f6fbf" d="M0 0h14v10.6H5.2L2.5 14V10.6H0z"/><path fill="#fff" d="M3.8 2.2h6.6v2.3h-.7l-.3-1.2H7.8v5h1v.7H5.2v-.7h1v-5H4.9l-.3 1.2h-.8z"/></svg>
<div class="a" style="left:190px;top:803.4px;font-size:11.2px;color:#333;white-space:nowrap;line-height:14px">Text_Caption_31</div>
<div class="a" style="left:321.4px;top:809.1px;width:4px;height:4px;border-radius:50%;background:#e2a033;box-shadow:0 0 0 .7px #7d8494"></div>
<div class="a" style="left:342.4px;top:809.1px;width:4px;height:4px;border-radius:50%;background:#e2a033;box-shadow:0 0 0 .7px #7d8494"></div>
<svg class="a" style="left:165px;top:825.2px" width="14" height="13" viewBox="0 0 14 13"><path fill="#e9a22b" d="M7 0l2.1 4.3 4.7.6-3.4 3.3.8 4.7L7 10.7l-4.2 2.2.8-4.7L.2 4.9l4.7-.6z"/></svg>
<div class="a" style="left:190px;top:824.2px;font-size:11.2px;color:#333;white-space:nowrap;line-height:14px">Moderate_Shade</div>
<div class="a" style="left:321.4px;top:829.9px;width:4px;height:4px;border-radius:50%;background:#e2a033;box-shadow:0 0 0 .7px #7d8494"></div>
<div class="a" style="left:342.4px;top:829.9px;width:4px;height:4px;border-radius:50%;background:#e2a033;box-shadow:0 0 0 .7px #7d8494"></div>
<svg class="a" style="left:165px;top:845.9px" width="15" height="15" viewBox="0 0 15 15"><path fill="#1f6fbf" d="M0 0h14v10.6H5.2L2.5 14V10.6H0z"/><path fill="#fff" d="M3.8 2.2h6.6v2.3h-.7l-.3-1.2H7.8v5h1v.7H5.2v-.7h1v-5H4.9l-.3 1.2h-.8z"/></svg>
<div class="a" style="left:190px;top:845.4px;font-size:11.2px;color:#333;white-space:nowrap;line-height:14px">Moderate</div>
<div class="a" style="left:321.4px;top:851.1px;width:4px;height:4px;border-radius:50%;background:#e2a033;box-shadow:0 0 0 .7px #7d8494"></div>
<div class="a" style="left:342.4px;top:851.1px;width:4px;height:4px;border-radius:50%;background:#e2a033;box-shadow:0 0 0 .7px #7d8494"></div>
<svg class="a" style="left:165px;top:866.8px" width="15" height="15" viewBox="0 0 15 15"><path fill="#1f6fbf" d="M0 0h14v10.6H5.2L2.5 14V10.6H0z"/><path fill="#fff" d="M3.8 2.2h6.6v2.3h-.7l-.3-1.2H7.8v5h1v.7H5.2v-.7h1v-5H4.9l-.3 1.2h-.8z"/></svg>
<div class="a" style="left:190px;top:866.3px;font-size:11.2px;color:#333;white-space:nowrap;line-height:14px">Text_Caption_34</div>
<div class="a" style="left:321.4px;top:872.0px;width:4px;height:4px;border-radius:50%;background:#e2a033;box-shadow:0 0 0 .7px #7d8494"></div>
<div class="a" style="left:342.4px;top:872.0px;width:4px;height:4px;border-radius:50%;background:#e2a033;box-shadow:0 0 0 .7px #7d8494"></div>
<div class="a" style="left:142px;top:778.7px;width:221px;height:1.5px;background:#5a5b60"></div>
<div class="a" style="left:142px;top:799.7px;width:221px;height:1.5px;background:#5a5b60"></div>
<div class="a" style="left:142px;top:820.5px;width:221px;height:1.5px;background:#5a5b60"></div>
<div class="a" style="left:142px;top:841.7px;width:221px;height:1.5px;background:#5a5b60"></div>
<div class="a" style="left:142px;top:862.6px;width:221px;height:1.5px;background:#5a5b60"></div>
<div class="a" style="left:142px;top:883.8px;width:221px;height:1.5px;background:#5a5b60"></div>
<div class="a" style="left:363.5px;top:768px;width:1156.5px;height:117px;background:#53565e"></div>
<div class="a" style="left:363.5px;top:778.9px;width:1156.5px;height:1px;background:#6d7078"></div>
<div class="a" style="left:363.5px;top:799.9px;width:1156.5px;height:1px;background:#6d7078"></div>
<div class="a" style="left:363.5px;top:820.7px;width:1156.5px;height:1px;background:#6d7078"></div>
<div class="a" style="left:363.5px;top:841.9px;width:1156.5px;height:1px;background:#6d7078"></div>
<div class="a" style="left:363.5px;top:862.8px;width:1156.5px;height:1px;background:#6d7078"></div>
<div class="a" style="left:363.5px;top:884px;width:1156.5px;height:1.5px;background:#3c3d42"></div>
<div class="a" style="left:1309.5px;top:768px;width:210.5px;height:11px;overflow:hidden"><div class="a" style="left:0;top:-9px;width:210.5px;height:20px;background:linear-gradient(#c9ecfb,#a9dcf5)"><div class="a" style="left:9px;top:3.7px;font-size:9.1px;color:#333;white-space:nowrap;line-height:12px">Extremely Loud :7.0s</div></div></div>
<div class="a" style="left:1092.5px;top:780.5px;width:215.70000000000005px;height:19.100000000000023px;background:linear-gradient(#c9ecfb,#a9dcf5);overflow:hidden"><div class="a" style="left:9px;top:3.3px;font-size:9.1px;color:#333;white-space:nowrap;line-height:12px">SmartShape:3.1s</div></div>
<div class="a" style="left:1092.5px;top:801.2px;width:427.5px;height:19.299999999999955px;background:linear-gradient(#c9ecfb,#a9dcf5);overflow:hidden"><div class="a" style="left:9px;top:3.3px;font-size:9.1px;color:#333;white-space:nowrap;line-height:12px">Very Loud :10.1s</div></div>
<div class="a" style="left:917.7px;top:822px;width:173.20000000000005px;height:19.700000000000045px;background:linear-gradient(#c9ecfb,#a9dcf5);overflow:hidden"><div class="a" style="left:9px;top:3.6px;font-size:9.1px;color:#333;white-space:nowrap;line-height:12px">SmartShape:2.5s</div></div>
<div class="a" style="left:917.7px;top:843.2px;width:602.3px;height:19.399999999999977px;background:linear-gradient(#c9ecfb,#a9dcf5);overflow:hidden"><div class="a" style="left:9px;top:3.4px;font-size:9.1px;color:#333;white-space:nowrap;line-height:12px">Moderate :12.6s</div></div>
<div class="a" style="left:805.7px;top:864.1px;width:714.3px;height:19.699999999999932px;background:linear-gradient(#c9ecfb,#a9dcf5);overflow:hidden"><div class="a" style="left:9px;top:3.5px;font-size:9.1px;color:#333;white-space:nowrap;line-height:12px">SOURCE OF NOISE :14.2s</div></div>
<svg class="a" style="left:363px;top:751px" width="1158" height="18" viewBox="363 751 1158 18"><rect x="363" y="751.5" width="1157" height="16.5" fill="#ececec"/><path d="M364.3 752V768 M371.3 765V768 M378.3 765V768 M385.3 765V768 M392.3 765V768 M399.3 761.5V768 M406.3 765V768 M413.3 765V768 M420.3 765V768 M427.3 765V768 M434.2 752V768 M441.2 765V768 M448.2 765V768 M455.2 765V768 M462.2 765V768 M469.2 761.5V768 M476.2 765V768 M483.2 765V768 M490.2 765V768 M497.2 765V768 M504.2 752V768 M511.2 765V768 M518.2 765V768 M525.2 765V768 M532.2 765V768 M539.2 761.5V768 M546.2 765V768 M553.2 765V768 M560.2 765V768 M567.2 765V768 M574.1 752V768 M581.1 765V768 M588.1 765V768 M595.1 765V768 M602.1 765V768 M609.1 761.5V768 M616.1 765V768 M623.1 765V768 M630.1 765V768 M637.1 765V768 M644.1 752V768 M651.1 765V768 M658.1 765V768 M665.1 765V768 M672.1 765V768 M679.1 761.5V768 M686.1 765V768 M693.1 765V768 M700.1 765V768 M707.1 765V768 M714.0 752V768 M721.0 765V768 M728.0 765V768 M735.0 765V768 M742.0 765V768 M749.0 761.5V768 M756.0 765V768 M763.0 765V768 M770.0 765V768 M777.0 765V768 M784.0 752V768 M791.0 765V768 M798.0 765V768 M805.0 765V768 M812.0 765V768 M819.0 761.5V768 M826.0 765V768 M833.0 765V768 M840.0 765V768 M847.0 765V768 M854.0 752V768 M860.9 765V768 M867.9 765V768 M874.9 765V768 M881.9 765V768 M888.9 761.5V768 M895.9 765V768 M902.9 765V768 M909.9 765V768 M916.9 765V768 M923.9 752V768 M930.9 765V768 M937.9 765V768 M944.9 765V768 M951.9 765V768 M958.9 761.5V768 M965.9 765V768 M972.9 765V768 M979.9 765V768 M986.9 765V768 M993.8 752V768 M1000.8 765V768 M1007.8 765V768 M1014.8 765V768 M1021.8 765V768 M1028.8 761.5V768 M1035.8 765V768 M1042.8 765V768 M1049.8 765V768 M1056.8 765V768 M1063.8 752V768 M1070.8 765V768 M1077.8 765V768 M1084.8 765V768 M1091.8 765V768 M1098.8 761.5V768 M1105.8 765V768 M1112.8 765V768 M1119.8 765V768 M1126.8 765V768 M1133.8 752V768 M1140.7 765V768 M1147.7 765V768 M1154.7 765V768 M1161.7 765V768 M1168.7 761.5V768 M1175.7 765V768 M1182.7 765V768 M1189.7 765V768 M1196.7 765V768 M1203.7 752V768 M1210.7 765V768 M1217.7 765V768 M1224.7 765V768 M1231.7 765V768 M1238.7 761.5V768 M1245.7 765V768 M1252.7 765V768 M1259.7 765V768 M1266.7 765V768 M1273.7 752V768 M1280.6 765V768 M1287.6 765V768 M1294.6 765V768 M1301.6 765V768 M1308.6 761.5V768 M1315.6 765V768 M1322.6 765V768 M1329.6 765V768 M1336.6 765V768 M1343.6 752V768 M1350.6 765V768 M1357.6 765V768 M1364.6 765V768 M1371.6 765V768 M1378.6 761.5V768 M1385.6 765V768 M1392.6 765V768 M1399.6 765V768 M1406.6 765V768 M1413.5 752V768 M1420.5 765V768 M1427.5 765V768 M1434.5 765V768 M1441.5 765V768 M1448.5 761.5V768 M1455.5 765V768 M1462.5 765V768 M1469.5 765V768 M1476.5 765V768 M1483.5 752V768 M1490.5 765V768 M1497.5 765V768 M1504.5 765V768 M1511.5 765V768 M1518.5 761.5V768" stroke="#555" stroke-width="1"/><text x="367.5" y="760.2" font-size="9.2" fill="#333">00:00</text><text x="437.4" y="760.2" font-size="9.2" fill="#333">00:01</text><text x="507.4" y="760.2" font-size="9.2" fill="#333">00:02</text><text x="577.4" y="760.2" font-size="9.2" fill="#333">00:03</text><text x="647.3" y="760.2" font-size="9.2" fill="#333">00:04</text><text x="717.2" y="760.2" font-size="9.2" fill="#333">00:05</text><text x="787.2" y="760.2" font-size="9.2" fill="#333">00:06</text><text x="857.2" y="760.2" font-size="9.2" fill="#333">00:07</text><text x="927.1" y="760.2" font-size="9.2" fill="#333">00:08</text><text x="997.1" y="760.2" font-size="9.2" fill="#333">00:09</text><text x="1067.0" y="760.2" font-size="9.2" fill="#333">00:10</text><text x="1137.0" y="760.2" font-size="9.2" fill="#333">00:11</text><text x="1206.9" y="760.2" font-size="9.2" fill="#333">00:12</text><text x="1276.9" y="760.2" font-size="9.2" fill="#333">00:13</text><text x="1346.8" y="760.2" font-size="9.2" fill="#333">00:14</text><text x="1416.8" y="760.2" font-size="9.2" fill="#333">00:15</text><text x="1486.7" y="760.2" font-size="9.2" fill="#333">00:16</text><rect x="364.5" y="752" width="6" height="16" fill="#f25565"/><path d="M1519.8 751V768" stroke="#555" stroke-width="1"/></svg>
<div class="a" style="left:363.4px;top:752px;width:1.6px;height:132px;background:#c8262c"></div>
<div class="a" style="left:363px;top:884px;width:1px;height:18px;background:#555"></div>
<div class="a" style="left:1524px;top:775px;width:0;height:0;border-left:4.7px solid transparent;border-right:4.7px solid transparent;border-bottom:5.7px solid #7a7f92"></div>
<div class="a" style="left:1522px;top:819px;width:13px;height:23.6px;background:#858893"></div>
<div class="a" style="left:1524px;top:874px;width:0;height:0;border-left:4.7px solid transparent;border-right:4.7px solid transparent;border-top:5.7px solid #7a7f92"></div>
<svg class="a" style="left:262px;top:885px" width="100" height="17" viewBox="262 885 100 17"><path fill="#a9c9ea" d="M266 889h1.8v6.5H266zM277.2 889v6.5l-8-3.25z"/><rect x="289" y="889.5" width="6.2" height="6.2" fill="#1f6fbf"/><rect x="303.8" y="886" width="16.6" height="14.5" fill="none" stroke="#1f6fbf" stroke-width="1.5"/><path fill="#1f6fbf" d="M308.6 888.6l8.3 4.6-8.3 4.6z"/><path fill="#1f6fbf" d="M326 889v8.4l7.6-4.2zM335.2 889h1.8v8.4h-1.8z"/><path fill="#1f6fbf" d="M347 891h2.4l3.4-2.8v10.4l-3.4-2.8H347z"/><path d="M354.2 890.6a4 4 0 0 1 0 5.6M355.8 889a6.4 6.4 0 0 1 0 8.8" fill="none" stroke="#1f6fbf" stroke-width="1.1"/></svg>
<svg class="a" style="left:364px;top:885px" width="320" height="18" viewBox="364 885 320 18"><path fill="#1f6fbf" d="M366.8 889h7v1.5h-1.2c0 2-2 2.8-2 4 0 1.2 2 2 2 4h1.2v1.5h-7V898.5H368c0-2 2-2.8 2-4 0-1.2-2-2-2-4h-1.2z"/><path fill="#eef0f5" d="M368.8 890.5h3c-.2 1.5-1.5 2.3-1.5 3.2h-.1c0-.9-1.3-1.7-1.4-3.2zM369.2 898.6c.3-1 1-1.6 1.1-2.2.1.6.8 1.2 1.1 2.2z"/><path d="M414.5 889v9" stroke="#1f6fbf" stroke-width="1.7"/><path d="M414.5 893.5h5" stroke="#1f6fbf" stroke-width="1.7"/><path fill="#1f6fbf" d="M419 890l4.8 3.5-4.8 3.5z"/><path d="M462.8 889v9M474.3 889v9M462.8 893.5h5" stroke="#1f6fbf" stroke-width="1.7"/><path fill="#1f6fbf" d="M467.5 890l4.8 3.5-4.8 3.5z"/><circle cx="517.5" cy="894.8" r="4.3" fill="none" stroke="#1f6fbf" stroke-width="1.8"/><path d="M517.5 892.5v2.5M515.5 889h4M512.6 890.6l1.4 1.2M522.4 890.6l-1.4 1.2" stroke="#1f6fbf" stroke-width="1.5"/><path fill="#8a8ea0" d="M676.3 889v9l-6.6-4.5z"/></svg>
<div class="a" style="left:381px;top:887.5px;font-size:11px;color:#333;line-height:13px">0.0s</div>
<div class="a" style="left:431px;top:894.5px;width:4px;height:1.2px;background:#555"></div><div class="a" style="left:437.5px;top:894.5px;width:4px;height:1.2px;background:#555"></div>
<div class="a" style="left:480.5px;top:894.5px;width:4px;height:1.2px;background:#555"></div><div class="a" style="left:487px;top:894.5px;width:4px;height:1.2px;background:#555"></div>
<div class="a" style="left:528.5px;top:887.5px;font-size:11px;color:#333;line-height:13px">20.5s</div>
<div class="a" style="left:571.5px;top:894.5px;width:80px;height:4px;background:#dfe3ea;border:1px solid #9aa3b8;border-radius:1px"></div>
<svg class="a" style="left:649px;top:888px" width="15" height="14" viewBox="0 0 15 14"><path d="M1 5.5L7.3 .8l6.3 4.7v7.7H1z" fill="#fbfbfb" stroke="#9ea4b3" stroke-width="1"/></svg>
<div class="a" style="left:686px;top:886.7px;width:652px;height:13px;background:#848892"></div>
<div class="a" style="left:1509.4px;top:889px;width:0;height:0;border-top:4.5px solid transparent;border-bottom:4.5px solid transparent;border-left:5.6px solid #7a7f92"></div>
</div>
<div id="props" class="a"></div>
<div class="a" style="left:0;top:0;width:0;height:0">
<div class="a" style="left:1552px;top:128px;width:24px;height:21px;background:#1f6fbf"></div>
<div class="a" style="left:1556px;top:132px;width:16px;height:12.7px;background:#fff;border:1px dashed #1b3d66"></div>
<div class="a" style="left:1586px;top:127px;width:206px;height:21.5px;background:#fff;border:1px solid #8e95aa"></div>
<svg class="a" style="left:1807px;top:130px" width="20" height="18" viewBox="0 0 20 18"><path fill="#4a5570" d="M1.5 3.5h4.5L3.75 6z"/><path d="M8 2.2h9.5M8 6.2h9.5M8 10.2h9.5M8 14.2h9.5" stroke="#4a5570" stroke-width="1.1"/></svg>
<div class="a" style="left:1572.6px;top:172.8px;font-size:11.4px;line-height:14px;white-space:nowrap;color:#2c2c2c;">Theme:</div>
<div class="a" style="left:1619px;top:169.4px;width:146.6px;height:22.4px;background:linear-gradient(#fefefe,#f2f3f6);border:1px solid #8e95aa"></div>
<div class="a" style="left:1747.4px;top:172px;width:1px;height:17px;background:#eceef2"></div>
<div class="a" style="left:1626px;top:173.2px;font-size:11.65px;line-height:14px;white-space:nowrap;color:#2c2c2c;">Audio_Fundama...</div>
<div class="a" style="left:1753px;top:178.6px;width:0;height:0;border-left:3.8px solid transparent;border-right:3.8px solid transparent;border-top:4.5px solid #4a5570"></div>
<div class="a" style="left:1640px;top:204.2px;width:110px;text-align:center;font-size:11.6px;line-height:14px;white-space:nowrap;color:#2c2c2c;">Master Slide</div>
<div class="a" style="left:1648px;top:225px;width:95px;height:70.6px;border:1px solid #2a70c0;background:#0b5579;overflow:hidden"><div class="a" style="left:3px;top:3px;width:87px;height:62.6px;background:linear-gradient(#0a4d6c,#083d57)"></div><div class="a" style="left:4px;top:6px;width:85px;height:14px;background:rgba(120,145,160,.45)"></div><div class="a" style="left:33px;top:12px;width:24px;height:1.5px;background:rgba(220,225,230,.35)"></div><div class="a" style="left:10px;top:30px;width:70px;height:28px;background:radial-gradient(closest-side,rgba(30,100,130,.3),rgba(30,100,130,0))"></div><div class="a" style="left:91.5px;top:0;width:1.5px;height:69px;background:#e8eef5"></div></div>
<div class="a" style="left:1748.6px;top:256.5px;width:0;height:0;border-left:5.7px solid transparent;border-right:5.7px solid transparent;border-top:9.5px solid #2a70c0"></div>
<div class="a" style="left:1640px;top:302.9px;width:110px;text-align:center;font-size:12px;line-height:14px;white-space:nowrap;color:#2c2c2c;font-weight:bold;color:#111">Slide 15</div>
<div class="a" style="left:1618.3px;top:322px;width:147.2px;height:21.6px;background:linear-gradient(#ffffff,#f0f1f4);border:1px solid #8e95aa"></div>
<div class="a" style="left:1618.3px;top:326.2px;width:147.20000000000005px;text-align:center;font-size:11.6px;line-height:14px;white-space:nowrap;color:#2c2c2c;color:#333">Reset Master Slide</div>
<div class="a" style="left:1618.3px;top:353px;width:147.2px;height:21.6px;background:linear-gradient(#ffffff,#f0f1f4);border:1px solid #8e95aa"></div>
<div class="a" style="left:1618.3px;top:357.2px;width:147.20000000000005px;text-align:center;font-size:11.6px;line-height:14px;white-space:nowrap;color:#2c2c2c;color:#333">Master slide view</div>
<div class="a" style="left:1543px;top:400px;width:297px;height:1px;background:#c9ccd4"></div>
<div class="a" style="left:1552px;top:388px;width:279.5px;height:26.3px;background:#ccd3e6;border:1px solid #8e95aa"></div>
<div class="a" style="left:1553.5px;top:389.5px;width:90px;height:23.3px;background:#404a66"></div>
<div class="a" style="left:1738.5px;top:389px;width:1px;height:24.3px;background:#e6e9f2"></div>
<div class="a" style="left:1644px;top:389px;width:1px;height:24.3px;background:#aab2c6"></div>
<div class="a" style="left:1553px;top:393.1px;width:91px;text-align:center;font-size:11.8px;line-height:14px;white-space:nowrap;color:#2c2c2c;color:#fff">Style</div>
<div class="a" style="left:1644px;top:393.6px;width:94.5px;text-align:center;font-size:11.8px;line-height:14px;white-space:nowrap;color:#2c2c2c;color:#333">Actions</div>
<div class="a" style="left:1738.5px;top:393.6px;width:93.0px;text-align:center;font-size:11.8px;line-height:14px;white-space:nowrap;color:#2c2c2c;color:#333">Options</div>
<div class="a" style="left:1550.3px;top:427.5px;width:11.5px;height:11.3px;background:#fff;border:1px solid #8e95aa"></div>
<svg class="a" style="left:1550px;top:425px" width="14" height="14" viewBox="0 0 14 14"><path d="M2.5 7.5l3 3.5L11.5 2" fill="none" stroke="#111" stroke-width="1.8"/></svg>
<div class="a" style="left:1566.5px;top:425.9px;font-size:11.8px;line-height:14px;white-space:nowrap;color:#2c2c2c;">Allow Gesture Navigation</div>
<div class="a" style="left:1553.4px;top:455.0px;font-size:11.6px;line-height:14px;white-space:nowrap;color:#2c2c2c;">Background</div>
<div class="a" style="left:1554px;top:476.3px;width:262.6px;height:22.3px;background:linear-gradient(#fefefe,#f2f3f6);border:1px solid #8e95aa"></div>

<div class="a" style="left:1561.3px;top:480.4px;font-size:11.65px;line-height:14px;white-space:nowrap;color:#2c2c2c;">Master Slide Background</div>
<div class="a" style="left:1804.6px;top:485.3px;width:0;height:0;border-left:3.6px solid transparent;border-right:3.6px solid transparent;border-top:4px solid #4a5570"></div>
<div class="a" style="left:1551px;top:509.4px;font-size:11.8px;line-height:14px;white-space:nowrap;color:#2c2c2c;">Quality</div>
<div class="a" style="left:1552px;top:530px;width:266.7px;height:22.6px;background:linear-gradient(#fefefe,#f2f3f6);border:1px solid #8e95aa"></div>

<div class="a" style="left:1559.3px;top:533.9px;font-size:11.8px;line-height:14px;white-space:nowrap;color:#2c2c2c;">Optimized</div>
<div class="a" style="left:1806.4px;top:539.2px;width:0;height:0;border-left:3.6px solid transparent;border-right:3.6px solid transparent;border-top:4px solid #4a5570"></div>
<div class="a" style="left:1550.3px;top:564.1px;width:11.5px;height:11.6px;background:#fff;border:1px solid #8e95aa"></div>
<div class="a" style="left:1566.5px;top:563.3px;font-size:11.8px;line-height:14px;white-space:nowrap;color:#2c2c2c;">Master Slide Objects On Top</div>
</div>
<div id="status" class="a">
<div class="a" style="left:0;top:5px;font-size:11.9px;color:#eaeaea;white-space:nowrap;line-height:14px">olumes/GRN Data HD/GRN Captivate Folder/Audio Fundamentals/Audio_Fundamaentals_04a.cptx</div>
<div class="a" style="left:1612.5px;top:1px;width:2px;height:21px;background:#9a9aa0"></div>
<div class="a" style="left:1624px;top:5px;font-size:12px;color:#eaeaea;white-space:nowrap;line-height:14px">Filmstrip View</div>
<div class="a" style="left:1714.8px;top:1px;width:2px;height:21px;background:#9a9aa0"></div>
<div class="a" style="left:1722px;top:5px;font-size:12px;color:#eaeaea;white-space:nowrap;line-height:14px">1024 x 627</div>
</div>
<div id="botblack" class="a"></div>
<div id="dropdown" class="a" style="z-index:10;left:42px;top:22px;width:218px;height:158px;border-radius:0 0 6px 6px;background:linear-gradient(#5e5f63,#45474b 60%,#393b3f);box-shadow:0 3px 8px rgba(0,0,0,.45);color:#fff;font-size:14.3px;overflow:hidden;-webkit-text-stroke:.25px #fff">
<div class="a" style="left:21px;top:5.5px">About Adobe Captivate...</div>
<div class="a" style="left:0;top:28px;width:218px;height:2px;background:#77787c"></div>
<div class="a" style="left:21px;top:36.5px">Preferences...</div>
<svg class="a" style="left:184px;top:39.5px" width="13" height="12" viewBox="0 0 13 12"><path d="M4 4h5v4H4zM4 4V2.3A1.7 1.7 0 1 0 2.3 4H4M9 4V2.3A1.7 1.7 0 1 1 10.7 4H9M4 8v1.7A1.7 1.7 0 1 1 2.3 8H4M9 8v1.7A1.7 1.7 0 1 0 10.7 8H9" fill="none" stroke="#fff" stroke-width="1.4"/></svg><div class="a" style="left:199px;top:36.5px">,</div>
<div class="a" style="left:0;top:59px;width:218px;height:2px;background:#737478"></div>
<div class="a" style="left:0;top:66px;width:218px;height:19px;background:#994e9c"></div>
<div class="a" style="left:21px;top:67.5px">Hide Adobe Captivate</div>
<svg class="a" style="left:185px;top:70.5px" width="13" height="12" viewBox="0 0 13 12"><path d="M4 4h5v4H4zM4 4V2.3A1.7 1.7 0 1 0 2.3 4H4M9 4V2.3A1.7 1.7 0 1 1 10.7 4H9M4 8v1.7A1.7 1.7 0 1 1 2.3 8H4M9 8v1.7A1.7 1.7 0 1 0 10.7 8H9" fill="none" stroke="#fff" stroke-width="1.4"/></svg><div class="a" style="left:199.5px;top:67.5px">H</div>
<div class="a" style="left:21px;top:86.5px">Hide Others</div>
<svg class="a" style="left:169.5px;top:89.5px" width="12" height="12" viewBox="0 0 12 12"><path d="M0.3 1.5h3.4l4.4 9h3.6M7.2 1.5h4.2" fill="none" stroke="#fff" stroke-width="1.5"/></svg><svg class="a" style="left:185px;top:89.5px" width="13" height="12" viewBox="0 0 13 12"><path d="M4 4h5v4H4zM4 4V2.3A1.7 1.7 0 1 0 2.3 4H4M9 4V2.3A1.7 1.7 0 1 1 10.7 4H9M4 8v1.7A1.7 1.7 0 1 1 2.3 8H4M9 8v1.7A1.7 1.7 0 1 0 10.7 8H9" fill="none" stroke="#fff" stroke-width="1.4"/></svg><div class="a" style="left:199.5px;top:86.5px">H</div>
<div class="a" style="left:21px;top:105.5px;color:#8d8f93;-webkit-text-stroke:.25px #8d8f93">Show All</div>
<div class="a" style="left:0;top:128px;width:218px;height:2px;background:#606266"></div>
<div class="a" style="left:21px;top:136.5px">Quit Adobe Captivate</div>
<svg class="a" style="left:185px;top:139.5px" width="13" height="12" viewBox="0 0 13 12"><path d="M4 4h5v4H4zM4 4V2.3A1.7 1.7 0 1 0 2.3 4H4M9 4V2.3A1.7 1.7 0 1 1 10.7 4H9M4 8v1.7A1.7 1.7 0 1 1 2.3 8H4M9 8v1.7A1.7 1.7 0 1 0 10.7 8H9" fill="none" stroke="#fff" stroke-width="1.4"/></svg><div class="a" style="left:199.5px;top:136.5px">Q</div>
</div>
<div id="rightedge" class="a"></div><div class="a" style="left:1843px;top:144px;width:4px;height:56px;background:#7d7f80"></div><div class="a" style="left:1843px;top:257px;width:4px;height:49px;background:#2a2f6a"></div><div class="a" style="left:1843px;top:369px;width:4px;height:55px;background:#85888a"></div><div class="a" style="left:1843px;top:488px;width:4px;height:10px;background:#a9a9ab"></div><div class="a" style="left:1843px;top:498px;width:4px;height:18px;background:#2a2a5e"></div><div class="a" style="left:1843px;top:516px;width:4px;height:18px;background:#a9a9ab"></div><div class="a" style="left:1843px;top:601px;width:4px;height:33px;background:#a9a9ab"></div><div class="a" style="left:1843px;top:711px;width:4px;height:10px;background:#a9a9ab"></div><div class="a" style="left:1843px;top:721px;width:4px;height:28px;background:#2a2a5e"></div><div class="a" style="left:1843px;top:749px;width:4px;height:10px;background:#a9a9ab"></div><div class="a" style="left:1843px;top:823px;width:4px;height:9px;background:#a9a9ab"></div><div class="a" style="left:1843px;top:832px;width:4px;height:21px;background:#2a2a5e"></div><div class="a" style="left:1843px;top:853px;width:4px;height:17px;background:#a9a9ab"></div>
</body></html>
